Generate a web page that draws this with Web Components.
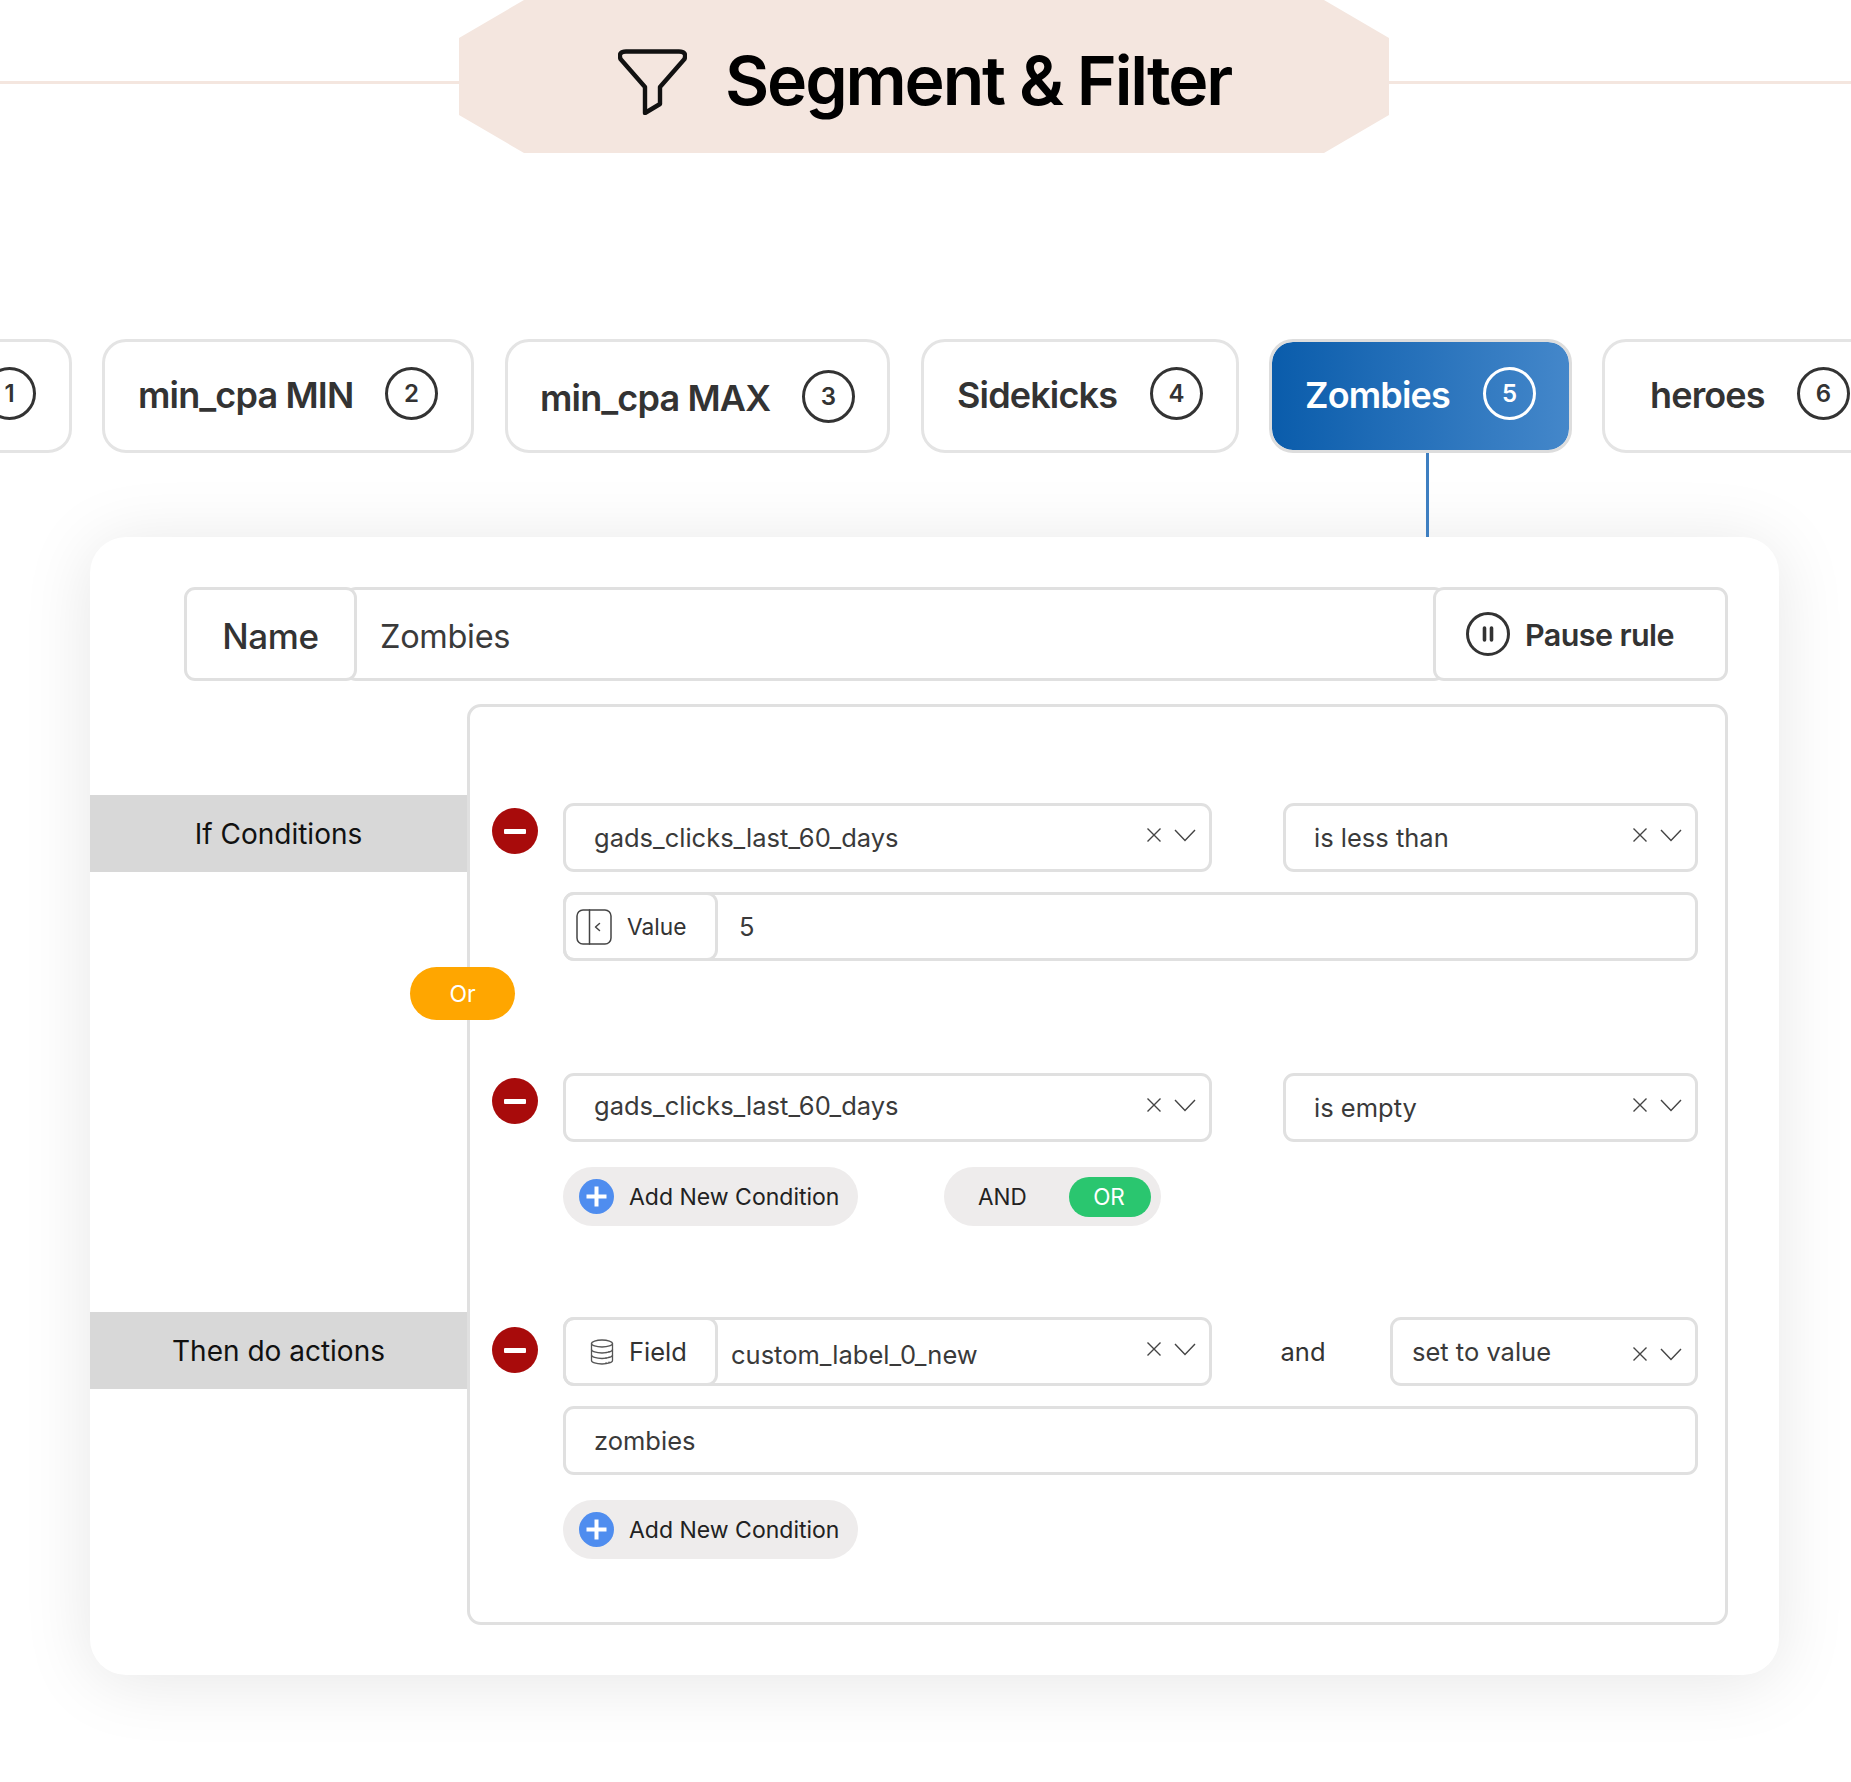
<!DOCTYPE html>
<html lang="en">
<head>
<meta charset="utf-8">
<title>Segment &amp; Filter</title>
<style>
    html, body {
        margin: 0;
        background: #ffffff;
    }
    body {
        width: 1851px;
        height: 1782px;
        overflow: hidden;
        font-family: Inter, "Liberation Sans", sans-serif;
        color: #333333;
    }
</style>
</head>
<body>
<sf-banner>Segment &amp; Filter</sf-banner>

<sf-tabs>
    <sf-tab num="1" style="width:172px;margin-right:-1px" clip></sf-tab>
    <sf-tab num="2" style="width:372px">min_cpa MIN</sf-tab>
    <sf-tab num="3" style="width:385px" low>min_cpa MAX</sf-tab>
    <sf-tab num="4" style="width:318px">Sidekicks</sf-tab>
    <sf-tab num="5" style="width:303px;margin:0 -1px" active>Zombies</sf-tab>
    <sf-tab num="6" style="width:284px" wide>heroes</sf-tab>
</sf-tabs>

<sf-card>
    <sf-name-row name="Name" value="Zombies" action="Pause rule" slot="top"></sf-name-row>
    <sf-band style="margin-top:91px">If Conditions</sf-band>
    <sf-band style="margin-top:440px">Then do actions</sf-band>
    <sf-rule-box slot="box">
        <sf-or-pill>Or</sf-or-pill>

        <sf-rule-row style="--minus-top:5px">
            <sf-line>
                <sf-input text="gads_clicks_last_60_days" clear style="width:649px"></sf-input>
                <sf-input text="is less than" clear style="width:415px"></sf-input>
            </sf-line>
            <sf-input icon="value" label="Value" text="5"></sf-input>
        </sf-rule-row>

        <sf-rule-row style="--minus-top:5px;margin-top:112px">
            <sf-line>
                <sf-input text="gads_clicks_last_60_days" clear dy="-4" style="width:649px"></sf-input>
                <sf-input text="is empty" clear style="width:415px"></sf-input>
            </sf-line>
            <sf-line style="margin-top:5px;justify-content:flex-start;gap:86px">
                <sf-add>Add New Condition</sf-add>
                <sf-toggle></sf-toggle>
            </sf-line>
        </sf-rule-row>

        <sf-rule-row style="--minus-top:10px;margin-top:91px">
            <sf-line>
                <sf-input icon="field" label="Field" text="custom_label_0_new" clear dy="6" style="width:649px"></sf-input>
                <span style="flex:1;text-align:center;font-size:25.5px;padding-left:4px">and</span>
                <sf-input text="set to value" clear pad="19" icon-dy="4" style="width:308px"></sf-input>
            </sf-line>
            <sf-input text="zombies"></sf-input>
            <sf-add style="margin-top:5px">Add New Condition</sf-add>
        </sf-rule-row>
    </sf-rule-box>
</sf-card>

<script>
class SfBanner extends HTMLElement {
    constructor() {
        super();
        this.attachShadow({ mode: 'open' });
        this.shadowRoot.innerHTML = `
            <style>
                :host {
                    display: grid;
                    grid-template-columns: 459px 930px 1fr;
                    align-items: center;
                    height: 152px;
                }
                .rule {
                    height: 3px;
                    margin-top: 12px;
                    background: #f4e6df;
                }
                .plate {
                    height: 153px;
                    background: #f4e6df;
                    clip-path: polygon(65px 0, 865px 0, 100% 38px, 100% 115px, 865px 100%, 65px 100%, 0 115px, 0 38px);
                    display: flex;
                    align-items: center;
                    padding-left: 159px;
                    box-sizing: border-box;
                    gap: 38px;
                }
                svg {
                    flex: none;
                    margin-top: 10px;
                }
                span {
                    margin-top: 7px;
                    font-size: 68px;
                    font-weight: 600;
                    letter-spacing: -2.15px;
                    color: #000000;
                }
            </style>
            <div class="rule"></div>
            <div class="plate">
                <svg width="69" height="66" viewBox="0 0 69 66" fill="none" stroke="#111" stroke-width="4.4" stroke-linejoin="round">
                    <path d="M8 2.5H61Q69 2.5 66.500 10L42 38V55L27 64V38L2.500 10Q0 2.500 8 2.500Z"/>
                </svg>
                <span><slot></slot></span>
            </div>
            <div class="rule"></div>
        `;
    }
}
customElements.define('sf-banner', SfBanner);

class SfTabs extends HTMLElement {
    constructor() {
        super();
        this.attachShadow({ mode: 'open' });
        this.shadowRoot.innerHTML = `
            <style>
                :host {
                    display: flex;
                    gap: 31px;
                    margin: 187px 0 0 -100px;
                    width: 2100px;
                }
            </style>
            <slot></slot>
        `;
    }
}
customElements.define('sf-tabs', SfTabs);

class SfTab extends HTMLElement {
    constructor() {
        super();
        this.attachShadow({ mode: 'open' });
        this.shadowRoot.innerHTML = `
            <style>
                :host {
                    display: flex;
                    flex: none;
                    position: relative;
                    align-items: center;
                    justify-content: space-between;
                    box-sizing: border-box;
                    height: 114px;
                    padding: 0 33px 6px 33px;
                    border: 3px solid #e4e4e4;
                    border-radius: 24px;
                    background: #ffffff;
                    color: #333333;
                    font-size: 36px;
                    font-weight: 600;
                    letter-spacing: -0.85px;
                }
                :host([clip]) {
                    justify-content: flex-end;
                }
                :host([low]) {
                    padding: 0 32px;
                }
                :host([wide]) {
                    padding-left: 45px;
                }
                :host([active]) {
                    color: #ffffff;
                    border-color: #dddddd;
                    background: linear-gradient(90deg, #0a5cab, #4487ca) padding-box;
                }
                /* stem from the open rule down to the card */
                :host([active])::after {
                    content: '';
                    position: absolute;
                    left: 154px;
                    top: 111px;
                    width: 3px;
                    height: 84px;
                    background: #3e7fc1;
                }
                .text {
                    margin-top: 4px;
                }
                .num {
                    flex: none;
                    box-sizing: border-box;
                    width: 53px;
                    height: 53px;
                    border: 3px solid currentColor;
                    border-radius: 50%;
                    display: flex;
                    align-items: center;
                    justify-content: center;
                    font-size: 24px;
                    letter-spacing: 0;
                }
            </style>
            <span class="text"><slot></slot></span>
            <span class="num"></span>
        `;
    }

    connectedCallback() {
        this.shadowRoot.querySelector('.num').textContent = this.getAttribute('num');
    }
}
customElements.define('sf-tab', SfTab);

class SfCard extends HTMLElement {
    constructor() {
        super();
        this.attachShadow({ mode: 'open' });
        this.shadowRoot.innerHTML = `
            <style>
                :host {
                    display: block;
                    box-sizing: border-box;
                    width: 1689px;
                    height: 1138px;
                    margin: 84px 0 0 90px;
                    padding: 50px 51px 0 0;
                    background: #ffffff;
                    border-radius: 36px;
                    box-shadow: 0 6px 70px rgba(0, 0, 0, 0.1);
                }
                .body {
                    display: grid;
                    grid-template-columns: 377px 1fr;
                    margin-top: 23px;
                }
                .labels {
                    display: flex;
                    flex-direction: column;
                }
            </style>
            <slot name="top"></slot>
            <div class="body">
                <div class="labels"><slot></slot></div>
                <slot name="box"></slot>
            </div>
        `;
    }
}
customElements.define('sf-card', SfCard);

class SfNameRow extends HTMLElement {
    constructor() {
        super();
        this.attachShadow({ mode: 'open' });
    }

    connectedCallback() {
        this.shadowRoot.innerHTML = `
            <style>
                :host {
                    display: flex;
                    height: 94px;
                    margin-left: 94px;
                }
                .cell {
                    box-sizing: border-box;
                    display: flex;
                    align-items: center;
                    border: 3px solid #e0e0e0;
                    border-radius: 11px;
                    background: #ffffff;
                    position: relative;
                }
                .name {
                    flex: none;
                    width: 173px;
                    padding-top: 4px;
                    justify-content: center;
                    font-size: 35px;
                    font-weight: 500;
                    letter-spacing: -0.4px;
                    z-index: 1;
                }
                .value {
                    flex: 1;
                    margin: 0 -12px;
                    padding: 4px 0 0 32px;
                    font-size: 32.5px;
                    letter-spacing: -0.3px;
                    color: #3a3a3a;
                }
                .action {
                    flex: none;
                    width: 295px;
                    padding-left: 30px;
                    gap: 15px;
                    font-size: 30.5px;
                    font-weight: 600;
                    letter-spacing: -0.6px;
                    z-index: 1;
                }
                svg {
                    flex: none;
                }
            </style>
            <div class="cell name">${this.getAttribute('name')}</div>
            <div class="cell value">${this.getAttribute('value')}</div>
            <div class="cell action">
                <svg width="44" height="44" viewBox="0 0 44 44" fill="none" stroke="#333" stroke-width="3">
                    <circle cx="22" cy="22" r="20.5"/>
                    <path d="M18.5 16V28M25.5 16V28" stroke-width="3.6" stroke-linecap="round"/>
                </svg>
                <span>${this.getAttribute('action')}</span>
            </div>
        `;
    }
}
customElements.define('sf-name-row', SfNameRow);

class SfBand extends HTMLElement {
    constructor() {
        super();
        this.attachShadow({ mode: 'open' });
        this.shadowRoot.innerHTML = `
            <style>
                :host {
                    display: flex;
                    align-items: center;
                    justify-content: center;
                    flex: none;
                    height: 77px;
                    background: #d8d8d8;
                    color: #111111;
                    font-size: 28px;
                }
            </style>
            <slot></slot>
        `;
    }
}
customElements.define('sf-band', SfBand);

class SfRuleBox extends HTMLElement {
    constructor() {
        super();
        this.attachShadow({ mode: 'open' });
        this.shadowRoot.innerHTML = `
            <style>
                :host {
                    display: block;
                    position: relative;
                    box-sizing: border-box;
                    height: 921px;
                    padding: 96px 27px 0 21px;
                    border: 3px solid #e0e0e0;
                    border-radius: 14px;
                    background: #ffffff;
                }
            </style>
            <slot></slot>
        `;
    }
}
customElements.define('sf-rule-box', SfRuleBox);

class SfOrPill extends HTMLElement {
    constructor() {
        super();
        this.attachShadow({ mode: 'open' });
        this.shadowRoot.innerHTML = `
            <style>
                :host {
                    position: absolute;
                    left: -60px;
                    top: 260px;
                    width: 105px;
                    height: 53px;
                    border-radius: 27px;
                    background: #ffa600;
                    color: #ffffff;
                    font-size: 23px;
                    display: flex;
                    align-items: center;
                    justify-content: center;
                }
            </style>
            <slot></slot>
        `;
    }
}
customElements.define('sf-or-pill', SfOrPill);

class SfRuleRow extends HTMLElement {
    constructor() {
        super();
        this.attachShadow({ mode: 'open' });
        this.shadowRoot.innerHTML = `
            <style>
                :host {
                    display: grid;
                    grid-template-columns: 46px 1fr;
                    column-gap: 26px;
                }
                .minus {
                    width: 46px;
                    height: 46px;
                    margin: var(--minus-top, 0) 0 0 1px;
                    border-radius: 50%;
                    background: #a80b0b;
                    display: flex;
                    align-items: center;
                    justify-content: center;
                }
                .minus::before {
                    content: '';
                    width: 22px;
                    height: 5px;
                    border-radius: 1px;
                    background: #ffffff;
                }
                .stack {
                    display: flex;
                    flex-direction: column;
                    gap: 20px;
                    min-width: 0;
                }
            </style>
            <div><div class="minus"></div></div>
            <div class="stack"><slot></slot></div>
        `;
    }
}
customElements.define('sf-rule-row', SfRuleRow);

class SfLine extends HTMLElement {
    constructor() {
        super();
        this.attachShadow({ mode: 'open' });
        this.shadowRoot.innerHTML = `
            <style>
                :host {
                    display: flex;
                    align-items: center;
                    justify-content: space-between;
                }
            </style>
            <slot></slot>
        `;
    }
}
customElements.define('sf-line', SfLine);

const FIELD_ICONS = {
    value: `<svg width="36" height="36" viewBox="0 0 36 36" fill="none" stroke="#444" stroke-width="1.5">
                <rect x="1" y="1" width="34" height="34" rx="6"/>
                <path d="M13.5 1V35M23.5 14.5L19.5 18L23.5 21.5" stroke-linecap="round" stroke-linejoin="round"/>
            </svg>`,
    field: `<svg width="24" height="26" viewBox="0 0 24 26" fill="none" stroke="#555" stroke-width="1.3">
                <ellipse cx="12" cy="4.5" rx="10.5" ry="3.5"/>
                <path d="M1.5 4.5V21.5C1.5 23.4 6.2 25 12 25S22.5 23.4 22.5 21.5V4.5"/>
                <path d="M1.5 10.5C1.5 12.4 6.2 14 12 14S22.5 12.4 22.5 10.5M1.5 16C1.5 17.9 6.2 19.5 12 19.5S22.5 17.9 22.5 16"/>
                <path d="M16 13.5h.1M19 12.8h.1M16 19h.1M19 18.3h.1M16 24h.1M19 23.3h.1" stroke-linecap="round" stroke-width="1.6"/>
            </svg>`
};

class SfInput extends HTMLElement {
    constructor() {
        super();
        this.attachShadow({ mode: 'open' });
    }

    connectedCallback() {
        const icon = this.getAttribute('icon');
        const label = this.getAttribute('label');
        const text = this.getAttribute('text');
        const dy = this.getAttribute('dy') || 0;
        const iconDy = this.getAttribute('icon-dy') || -6;
        const pad = this.getAttribute('pad') || (icon === 'value' ? 21 : icon === 'field' ? 13 : 28);
        const prefix = icon ? `
            <div class="prefix ${icon}">
                ${FIELD_ICONS[icon]}
                <span>${label}</span>
            </div>` : '';
        const controls = this.hasAttribute('clear') ? `
            <svg class="controls" style="margin-top:${iconDy}px" width="50" height="16" viewBox="0 0 50 16" fill="none" stroke="#444" stroke-width="1.4">
                <path d="M1.5 1.5L14.5 14.5M14.5 1.5L1.5 14.5"/>
                <path d="M29 3L39 13.5L49 3"/>
            </svg>` : '';
        this.shadowRoot.innerHTML = `
            <style>
                :host {
                    display: flex;
                    align-items: center;
                    flex: none;
                    box-sizing: border-box;
                    height: 69px;
                    border: 3px solid #e0e0e0;
                    border-radius: 11px;
                    background: #ffffff;
                    font-size: 25.5px;
                    color: #3a3a3a;
                }
                .prefix {
                    flex: none;
                    box-sizing: border-box;
                    display: flex;
                    align-items: center;
                    width: 155px;
                    height: 69px;
                    margin: -3px 0 -3px -3px;
                    border: 3px solid #e0e0e0;
                    border-radius: 11px;
                    font-size: 22.7px;
                    color: #333333;
                }
                .prefix.value {
                    padding-left: 10px;
                    gap: 15px;
                }
                .prefix.field {
                    padding-left: 24px;
                    gap: 15px;
                    font-size: 25.5px;
                }
                svg {
                    flex: none;
                }
                .text {
                    flex: 1;
                    min-width: 0;
                    padding-left: ${pad}px;
                    margin-top: ${dy}px;
                }
                .controls {
                    margin-right: 13px;
                }
            </style>
            ${prefix}
            <span class="text">${text}</span>
            ${controls}
        `;
    }
}
customElements.define('sf-input', SfInput);

class SfAdd extends HTMLElement {
    constructor() {
        super();
        this.attachShadow({ mode: 'open' });
        this.shadowRoot.innerHTML = `
            <style>
                :host {
                    display: flex;
                    align-items: center;
                    align-self: flex-start;
                    flex: none;
                    box-sizing: border-box;
                    width: 295px;
                    height: 59px;
                    padding-left: 16px;
                    gap: 15px;
                    border-radius: 30px;
                    background: #eeecec;
                    font-size: 23px;
                    color: #222222;
                }
                svg {
                    flex: none;
                }
            </style>
            <svg width="35" height="35" viewBox="0 0 35 35">
                <circle cx="17.5" cy="17.5" r="17.5" fill="#4f8def"/>
                <path d="M17.5 7.5V27.5M7.5 17.5H27.5" stroke="#fff" stroke-width="4"/>
            </svg>
            <slot></slot>
        `;
    }
}
customElements.define('sf-add', SfAdd);

class SfToggle extends HTMLElement {
    constructor() {
        super();
        this.attachShadow({ mode: 'open' });
        this.shadowRoot.innerHTML = `
            <style>
                :host {
                    display: flex;
                    align-items: center;
                    justify-content: space-between;
                    flex: none;
                    box-sizing: border-box;
                    width: 217px;
                    height: 59px;
                    padding: 0 10px 0 34px;
                    border-radius: 30px;
                    background: #eeecec;
                    font-size: 22.5px;
                    color: #222222;
                }
                .on {
                    box-sizing: border-box;
                    width: 82px;
                    height: 40px;
                    padding-right: 2px;
                    border-radius: 20px;
                    background: #2ac66f;
                    color: #ffffff;
                    display: flex;
                    align-items: center;
                    justify-content: center;
                }
            </style>
            <span>AND</span>
            <span class="on">OR</span>
        `;
    }
}
customElements.define('sf-toggle', SfToggle);
</script>
</body>
</html>
